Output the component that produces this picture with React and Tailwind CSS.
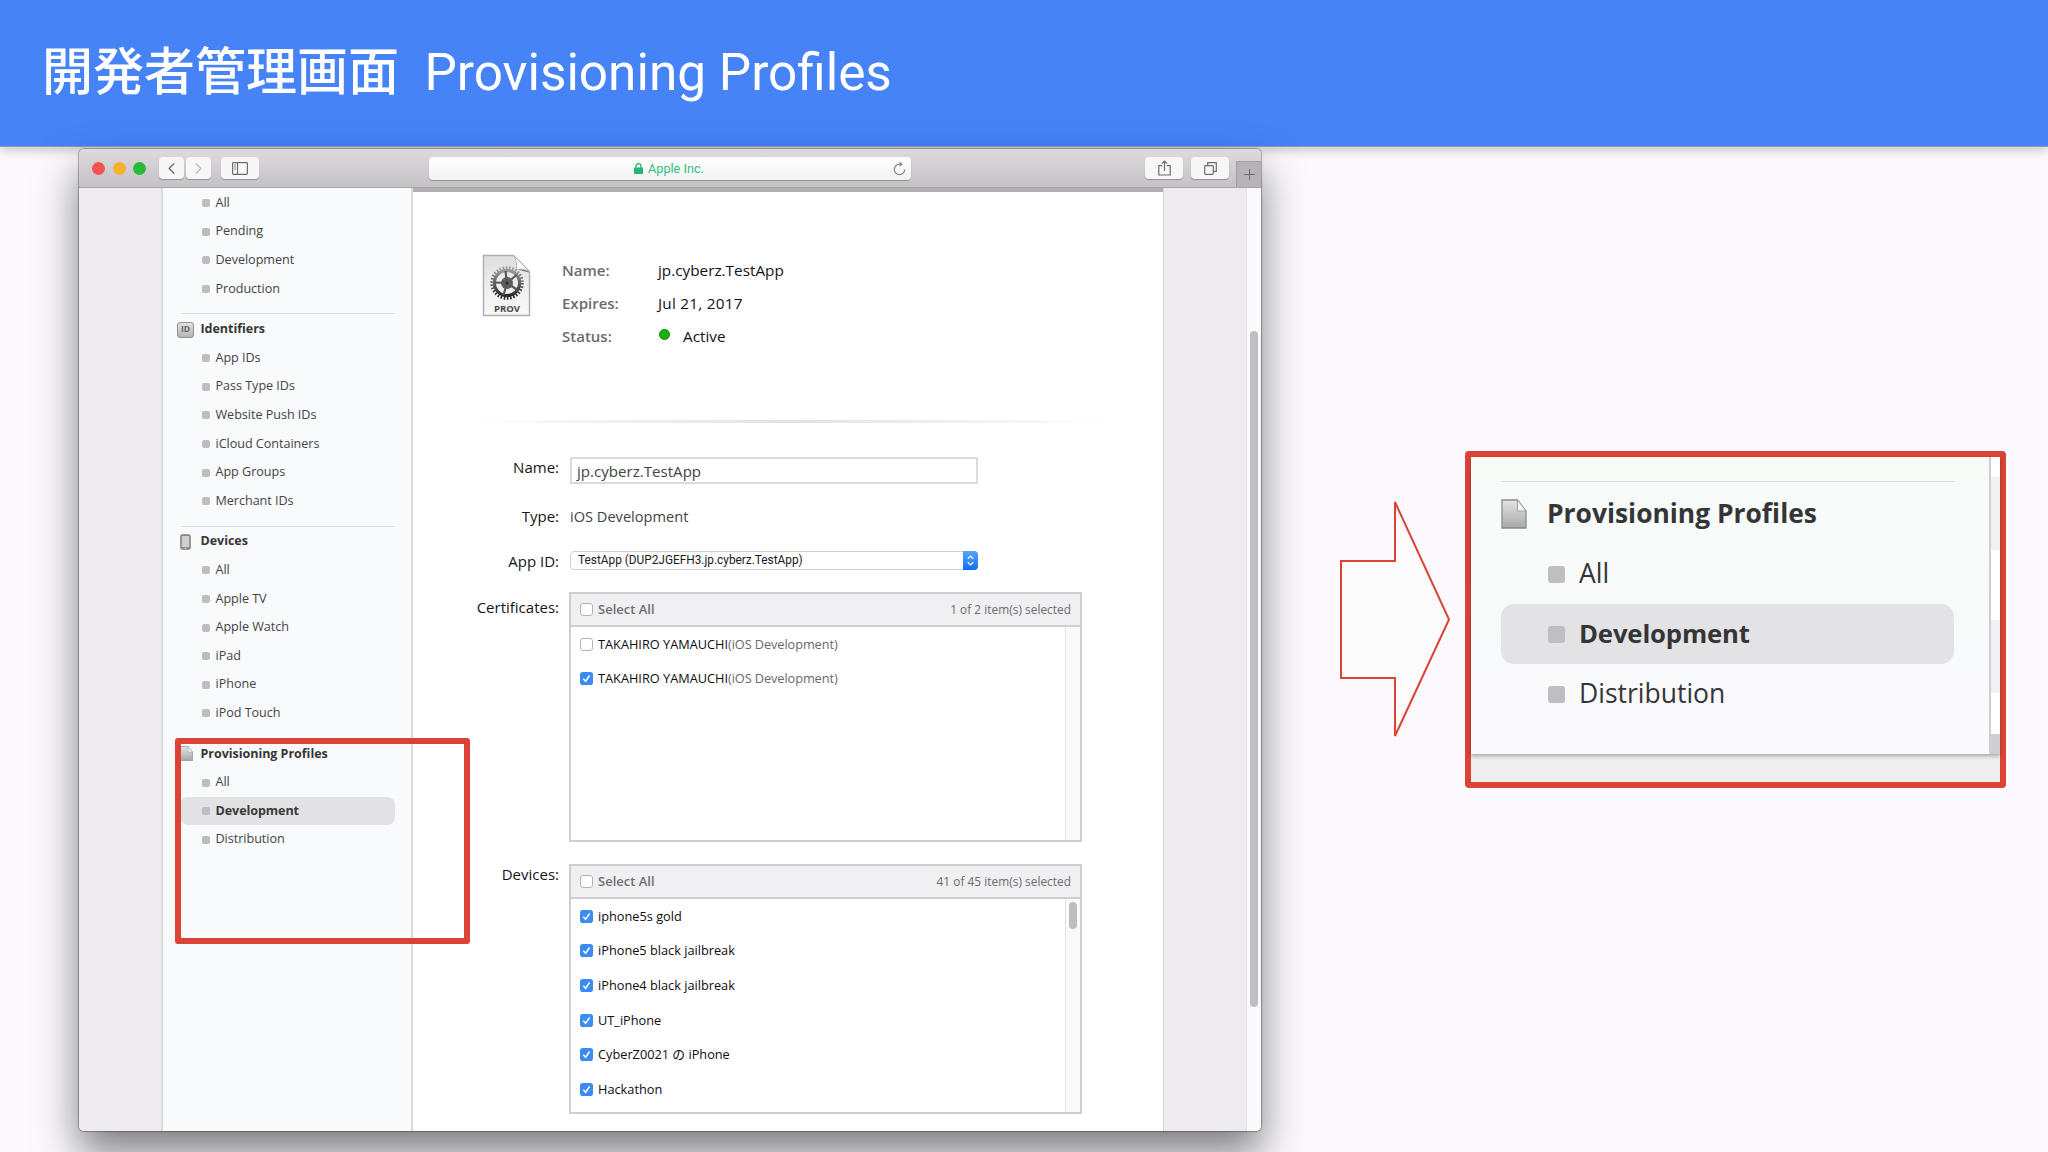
import React from 'react'
import clsx from 'clsx'
import { ChevronLeft, ChevronRight, Plus } from 'lucide-react'

const sections = [
    { items: ['All', 'Pending', 'Development', 'Production'] },
    { title: 'Identifiers', icon: 'id', items: ['App IDs', 'Pass Type IDs', 'Website Push IDs', 'iCloud Containers', 'App Groups', 'Merchant IDs'] },
    { title: 'Devices', icon: 'device', items: ['All', 'Apple TV', 'Apple Watch', 'iPad', 'iPhone', 'iPod Touch'] },
    { title: 'Provisioning Profiles', icon: 'file', items: ['All', 'Development', 'Distribution'], active: 'Development' },
]

const certificates = [
    { name: 'TAKAHIRO YAMAUCHI', note: '(iOS Development)', checked: false },
    { name: 'TAKAHIRO YAMAUCHI', note: '(iOS Development)', checked: true },
]

const devices = ['iphone5s gold', 'iPhone5 black jailbreak', 'iPhone4 black jailbreak', 'UT_iPhone', 'CyberZ0021 の iPhone', 'Hackathon']
    .map((name) => ({ name, checked: true }))

function FileIcon({ className }) {
    return (
        <svg className={className} viewBox="0 0 26 30" preserveAspectRatio="none">
            <defs>
                <linearGradient id="file" x1="0" y1="0" x2="0" y2="1">
                    <stop offset="0" stopColor="#e4e4e4" />
                    <stop offset="1" stopColor="#a9a9ab" />
                </linearGradient>
            </defs>
            <path d="M1 1h15.500l8.500 11v17H1z" fill="url(#file)" stroke="#8b8b8d" strokeWidth="1.300" />
            <path d="M16.500 1v11H25z" fill="#f6f6f6" stroke="#a0a0a2" />
        </svg>
    )
}

function SectionIcon({ type }) {
    if (type === 'id') {
        return (
            <span className="flex h-4 w-[17px] items-center justify-center rounded-[3px] border border-[#929294] bg-gradient-to-b from-[#e2e2e3] to-[#b4b4b6] text-[8.500px] leading-none font-bold text-[#666]">
                ID
            </span>
        )
    }
    if (type === 'device') {
        return (
            <svg className="ml-[3px] h-4 w-[11px]" viewBox="0 0 11 16">
                <rect x="0.700" y="0.700" width="9.600" height="14.600" rx="1.500" fill="#8c8c8e" stroke="#858588" />
                <rect x="1.800" y="2" width="7.400" height="11" fill="#cfcfd1" />
                <circle cx="5.500" cy="14.200" r="0.700" fill="#ddd" />
            </svg>
        )
    }
    return <FileIcon className="ml-[3px] h-[15px] w-[13px]" />
}

function Sidebar() {
    return (
        <aside className="w-[252px] shrink-0 border-x-2 border-[#d9d9dc] bg-[#f9fafc] pt-[1px] pl-[14px] text-[12.600px] tracking-[-0.030px] text-[#434346]">
            {sections.map((section, i) => (
                <div key={i}>
                    {section.title && (
                        <>
                            <hr className="mt-[10px] mr-[16px] ml-1 border-[#dfdfe1]" />
                            <div className="mt-[1px] flex h-[28.600px] items-center">
                                <div className="w-[23.500px]"><SectionIcon type={section.icon} /></div>
                                <span className="text-[12.500px] font-bold text-[#353538]">{section.title}</span>
                            </div>
                        </>
                    )}
                    {section.items.map((item) => (
                        <div
                            key={item}
                            className={clsx(
                                'mr-[16px] ml-[3px] flex h-[28.600px] items-center gap-[6px] rounded-[8px] pl-[21.500px]',
                                item === section.active && 'bg-[#e2e2e4] font-bold tracking-[-0.100px] text-[#39393c]'
                            )}
                        >
                            <span className="size-2 rounded-[2px] bg-[#bebec0]" />
                            {item}
                        </div>
                    ))}
                </div>
            ))}
        </aside>
    )
}

function ToolButton({ className, children }) {
    return (
        <div className={clsx('flex h-[22px] items-center justify-center rounded-[4px] bg-[#f8f7f8] text-[#6d6d6f] shadow-[0_1px_1px_rgba(0,0,0,0.28)]', className)}>
            {children}
        </div>
    )
}

function Toolbar() {
    return (
        <div className="flex h-[39px] shrink-0 items-center rounded-t-[5px] border-b border-[#a5a3a5] bg-gradient-to-b from-[#dddbdd] to-[#c4c2c4] pl-[13px]">
            <div className="flex gap-[7.500px]">
                <span className="size-[13px] rounded-full bg-[#f5534f]" />
                <span className="size-[13px] rounded-full bg-[#f6b02b]" />
                <span className="size-[13px] rounded-full bg-[#29bb38]" />
            </div>
            <ToolButton className="ml-[13px] w-[25px]"><ChevronLeft size={19} strokeWidth={1.700} /></ToolButton>
            <ToolButton className="ml-[2px] w-[25px] text-[#bdbdbf]"><ChevronRight size={19} strokeWidth={1.700} /></ToolButton>
            <ToolButton className="ml-[10px] w-[38px]">
                <svg width="16" height="13" viewBox="0 0 16 13" fill="none" stroke="currentColor">
                    <rect x="0.600" y="0.600" width="14.800" height="11.800" rx="0.800" strokeWidth="1.200" />
                    <path d="M5.500 1v11" strokeWidth="1.200" />
                    <path d="M2 3h2M2 5h2M2 7h2" strokeWidth="0.800" />
                </svg>
            </ToolButton>
            <div className="ml-[170px] flex h-[23px] w-[482px] items-center rounded-[4px] bg-gradient-to-b from-white to-[#f3f2f3] shadow-[0_1px_1px_rgba(0,0,0,0.28)]">
                <svg className="ml-[205px]" width="9" height="11" viewBox="0 0 9 11">
                    <rect y="4.500" width="9" height="6.500" rx="0.800" fill="#1eb873" />
                    <path d="M2 5V3.200a2.500 2.500 0 0 1 5 0V5" fill="none" stroke="#1eb873" strokeWidth="1.300" />
                </svg>
                <span className="ml-[5px] pt-[2px] font-[Roboto] text-[12.700px] text-[#31bd7e]">Apple Inc.</span>
                <svg className="mr-[5px] ml-auto" width="13" height="15" viewBox="0 0 13 15" fill="none" stroke="#858587" strokeWidth="1.200">
                    <path d="M6.500 3.200A5.200 5.200 0 1 0 11.700 8.400" />
                    <path d="M6.500 0.600 9.800 3.200 6.500 5.800z" fill="#858587" stroke="none" />
                </svg>
            </div>
            <ToolButton className="ml-[234px] w-[38px]">
                <svg width="13" height="16" viewBox="0 0 13 16" fill="none" stroke="currentColor" strokeWidth="1.200">
                    <path d="M4.300 5.600H.8v9.400h11.400V5.600H8.700M6.500 11V1.200M3.800 3.700l2.700-2.700 2.700 2.700" />
                </svg>
            </ToolButton>
            <ToolButton className="ml-2 w-[38px]">
                <svg width="13" height="13" viewBox="0 0 13 13" fill="none" stroke="currentColor" strokeWidth="1.200">
                    <rect x="0.700" y="3.700" width="8.600" height="8.600" rx="0.800" />
                    <path d="M3.700 3.500V.7h8.600v8.600H9.500" />
                </svg>
            </ToolButton>
            <div className="mt-auto ml-auto flex h-[26px] w-[25px] items-center justify-center border-t border-l border-[#a09fa1] bg-[#b5b3b5] text-[#6c6c6e]">
                <Plus size={17} strokeWidth={1.400} />
            </div>
        </div>
    )
}

function ProvIcon() {
    return (
        <svg className="h-[63px] w-[49px] shrink-0" viewBox="0 0 49 63">
            <defs>
                <linearGradient id="paper" x1="0" y1="0" x2="0" y2="1">
                    <stop offset="0" stopColor="#dededf" />
                    <stop offset="0.600" stopColor="#f1f1f2" />
                    <stop offset="1" stopColor="#f8f8f8" />
                </linearGradient>
                <linearGradient id="gear" x1="0" y1="0" x2="0" y2="1">
                    <stop offset="0" stopColor="#9b9b9d" />
                    <stop offset="1" stopColor="#29292b" />
                </linearGradient>
            </defs>
            <path d="M1.500 1.500h30l16 16v44h-46z" fill="url(#paper)" stroke="#aeaeb0" strokeWidth="1.400" />
            <path d="M35 15.500 47 18.500 46 16z" fill="#6f6f71" />
            <path d="M31.500 1.500Q36 9 34 15.500 41 13.500 47.500 17.500z" fill="#fcfcfc" stroke="#b5b5b7" />
            <g fill="none" stroke="url(#gear)">
                <circle cx="25" cy="29" r="15.200" strokeWidth="3.200" strokeDasharray="1.600 1.580" />
                <circle cx="25" cy="29" r="12.600" strokeWidth="3.200" />
            </g>
            <path d="M25 29 21.500 41M25 29 35.500 36M25 29 34.500 21M25 29 23.500 17M25 29 12.500 28.500" stroke="#59595b" strokeWidth="2.200" />
            <circle cx="25" cy="29" r="6" fill="#5d5d5f" />
            <circle cx="25" cy="29" r="1.500" fill="#303032" />
            <text x="25" y="57.800" textAnchor="middle" fontSize="9.600" fontWeight="700" fill="#4a4a4c" fontFamily="Open Sans">PROV</text>
        </svg>
    )
}

function CheckBox({ checked }) {
    if (!checked) {
        return <span className="size-[13px] shrink-0 rounded-[3px] border border-[#b4b3b6] bg-white" />
    }
    return (
        <svg className="size-[13px] shrink-0" viewBox="0 0 13 13">
            <rect width="13" height="13" rx="2.800" fill="#3b8cf2" />
            <path d="M3.300 6.800 5.600 9.300 9.600 3.500" fill="none" stroke="#fff" strokeWidth="1.500" />
        </svg>
    )
}

function ListBox({ count, rows, scroll }) {
    return (
        <div className="-ml-px flex h-[250px] w-[513px] flex-col border-2 border-[#d0ced2] bg-white">
            <div className="flex h-[33px] shrink-0 items-center gap-[5px] border-b-2 border-[#d0ced2] bg-[#f0eff2] pr-[9px] pl-[9px]">
                <CheckBox />
                <span className="text-[13px] font-semibold text-[#6f6e72]">Select All</span>
                <span className="ml-auto pt-[1px] text-[11.800px] tracking-[0.050px] text-[#6c6b6f]">{count}</span>
            </div>
            <div className="flex flex-1 justify-between">
                <div className="pl-[9px]">
                    {rows.map((row, i) => (
                        <div key={i} className="flex h-[34.620px] items-center gap-[5px] text-[12.750px] text-[#0c0c0e]">
                            <CheckBox checked={row.checked} />
                            <span>
                                {row.name}
                                {row.note && <span className="tracking-[-0.080px] text-[#68686b]">{row.note}</span>}
                            </span>
                        </div>
                    ))}
                </div>
                <div className="w-[15px] border-l border-[#e2e1e4] bg-[#faf9fb] pt-[3px] pl-[3px]">
                    {scroll && <div className="h-[27px] w-[8px] rounded-full bg-[#bfbdc0]" />}
                </div>
            </div>
        </div>
    )
}

function FormRow({ label, className, labelClassName, children }) {
    return (
        <div className={clsx('flex items-start', className)}>
            <label className={clsx('w-[146px] shrink-0 text-right text-[15px] leading-5 text-[#151517]', labelClassName)}>{label}</label>
            <div className="ml-[11px]">{children}</div>
        </div>
    )
}

function Profile() {
    return (
        <main className="h-full w-[750px] shrink-0 overflow-hidden border-t-4 border-[#b0aeb0] bg-white">
            <div className="flex h-[228px] items-start pt-[62px] pl-[69px]">
                <ProvIcon />
                <dl className="mt-0 ml-[31px] grid grid-cols-[96px_auto] text-[15.300px] leading-[32.900px] text-[#121214] [&>dt]:text-[15px] [&>dt]:font-semibold [&>dt]:text-[#6b6b6e]">
                    <dt>Name:</dt>
                    <dd>jp.cyberz.TestApp</dd>
                    <dt>Expires:</dt>
                    <dd className="tracking-[0.250px]">Jul 21, 2017</dd>
                    <dt>Status:</dt>
                    <dd className="flex items-center">
                        <span className="mb-[3px] ml-[1px] size-[11px] rounded-full border border-[#128a0c] bg-[#17b30c]" />
                        <span className="ml-[13px]">Active</span>
                    </dd>
                </dl>
            </div>
            <div className="ml-[50px] h-[3px] w-[654px] bg-gradient-to-r from-transparent via-[#e2e1e3] via-50% to-transparent" />

            <div className="mt-[34px]">
                <FormRow label="Name:" className="h-[49px]">
                    <div className="flex h-[27px] w-[408px] items-center border-2 border-[#dbdadd] pt-px pl-[5px] text-[15.100px] text-[#434345]">
                        jp.cyberz.TestApp
                    </div>
                </FormRow>
                <FormRow label="Type:" className="h-[45px]">
                    <span className="block text-[14.600px] leading-5 text-[#434345]">iOS Development</span>
                </FormRow>
                <FormRow label="App ID:" className="h-[41px]">
                    <div className="flex h-[19px] w-[408px] items-center rounded-[4px] border border-[#d0cfd2] font-[Roboto] text-[11.850px] text-[#1a1a1c]">
                        <span className="pt-px pl-[7px]">TestApp (DUP2JGEFH3.jp.cyberz.TestApp)</span>
                        <span className="-my-px -mr-px ml-auto flex h-[19px] w-[15px] items-center justify-center rounded-r-[4px] bg-gradient-to-b from-[#56a5f9] to-[#0f6cf7]">
                            <svg width="7" height="11" viewBox="0 0 7 11" fill="none" stroke="#fff" strokeWidth="1.200">
                                <path d="M0.700 3.800 3.500 1l2.800 2.800M0.700 7.200 3.500 10l2.800-2.800" />
                            </svg>
                        </span>
                    </div>
                </FormRow>
                <FormRow label="Certificates:" className="h-[272px]" labelClassName="pt-[5px]">
                    <ListBox count="1 of 2 item(s) selected" rows={certificates} />
                </FormRow>
                <FormRow label="Devices:">
                    <ListBox count="41 of 45 item(s) selected" rows={devices} scroll />
                </FormRow>
            </div>
        </main>
    )
}

function BrowserWindow() {
    return (
        <div className="mt-[2px] ml-[79px] flex h-[982px] w-[1182px] shrink-0 flex-col rounded-[5px] shadow-[0_22px_42px_rgba(0,0,0,0.5),0_0_1px_1px_rgba(0,0,0,0.3)]">
            <Toolbar />
            <div className="flex min-h-0 flex-1 overflow-hidden rounded-b-[5px]">
                <div className="w-[82px] shrink-0 bg-[#eeecef]" />
                <Sidebar />
                <Profile />
                <div className="flex-1 border-l border-[#d6d5d8] bg-[#eeecef]" />
                <div className="w-[15px] border-l border-[#e2e1e4] bg-[#faf9fc] pt-[143px] pl-[3px]">
                    <div className="h-[676px] w-[8px] rounded-full bg-[#c0bec1]" />
                </div>
            </div>
        </div>
    )
}

function Arrow() {
    return (
        <svg className="mt-[353px] ml-[78px] h-[238px] w-[112px] shrink-0" viewBox="0 0 112 238">
            <path d="M2 61h54V2l54 117.500L56 236v-58H2z" fill="#fcfbfb" stroke="#da4336" strokeWidth="2" />
        </svg>
    )
}

function CalloutItem({ active, children }) {
    return (
        <div className={clsx('mr-[35px] ml-[30px] flex h-[60px] items-center gap-[14px] rounded-[13px] pl-[47px]', active ? 'bg-[#e3e2e4] text-[25.700px] font-bold tracking-[-0.150px]' : 'text-[26.500px]')}>
            <span className="size-[17px] rounded-[3px] bg-[#bfbec0]" />
            {children}
        </div>
    )
}

function Callout() {
    return (
        <div className="mt-[304px] ml-[14px] flex h-[337px] w-[541px] shrink-0 flex-col rounded-[4px] border-6 border-[#da4336] bg-[#eeeeee]">
            <div className="flex h-[297px] shadow-[0_2px_4px_rgba(0,0,0,0.3)]">
                <div className="flex-1 bg-gradient-to-b from-[#f6fbf8] to-[#faf9fc] text-[#353538]">
                    <hr className="mt-6 mr-[34px] ml-[30px] border-[#dcdfde]" />
                    <div className="mt-[1px] flex h-[61px] items-center pl-[30px]">
                        <FileIcon className="h-[30px] w-[26px]" />
                        <span className="ml-5 text-[26.400px] font-bold">Provisioning Profiles</span>
                    </div>
                    <CalloutItem>All</CalloutItem>
                    <CalloutItem active>Development</CalloutItem>
                    <CalloutItem>Distribution</CalloutItem>
                </div>
                <div className="flex w-[11px] flex-col border-l-2 border-[#cfced1] bg-white">
                    <div className="mt-5 h-[73px] bg-[#f2f2f5]" />
                    <div className="mt-[70px] h-[73px] bg-[#f2f2f5]" />
                    <div className="mt-auto h-5 bg-[#cfced0]" />
                </div>
            </div>
        </div>
    )
}

function App() {
    return (
        <div className="relative flex h-[1152px] w-[2048px] flex-col overflow-hidden bg-[#fbf9fd] font-['Open_Sans','Noto_Sans_CJK_JP',sans-serif]">
            <header className="flex h-[147px] shrink-0 items-center border-b border-[#8f9ba6] bg-[#4583f7] pl-[42px] font-[Roboto,'Noto_Sans_CJK_JP',sans-serif] text-[51.300px] whitespace-pre text-white shadow-[0_3px_10px_rgba(0,0,0,0.22)]">
                <span className="text-[51px] font-medium">開発者管理画面</span>
                <span>  Provisioning Profiles</span>
            </header>
            <div className="flex items-start">
                <BrowserWindow />
                <Arrow />
                <Callout />
            </div>
            <div className="absolute top-[738px] left-[175px] h-[206px] w-[295px] rounded-[3px] border-6 border-[#da4336]" />
        </div>
    )
}

export default App
